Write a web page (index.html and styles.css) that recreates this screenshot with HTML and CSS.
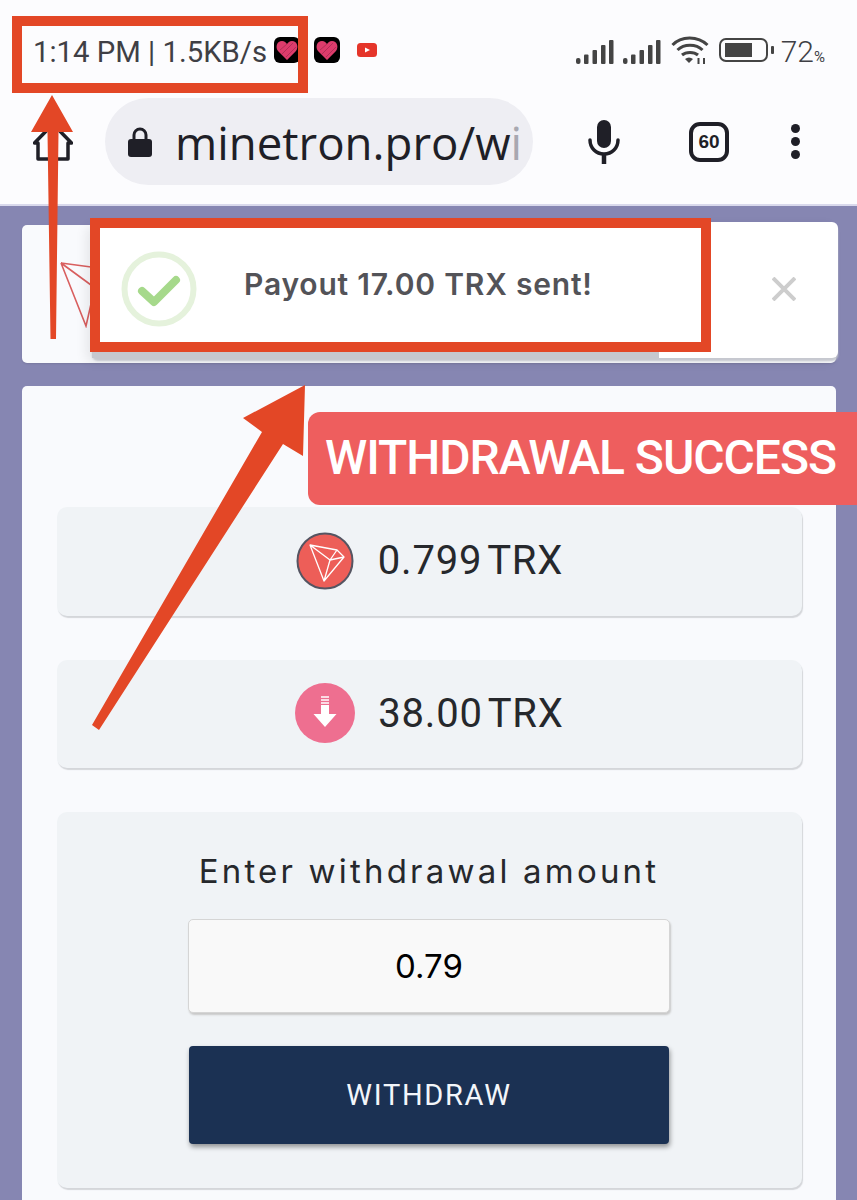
FILE: index.html
```html
<!DOCTYPE html>
<html lang="en">
<head>
<meta charset="utf-8">
<title>Minetron withdraw</title>
<link rel="stylesheet" href="styles.css">
</head>
<body>
<header class="chrome">
  <div class="status">
    <div class="status-left">
      <span class="clock">1:14 PM | 1.5KB/s</span>
      <svg class="app" viewBox="0 0 26 26"><rect width="26" height="26" rx="6" fill="#000"/><path d="M13 23 4 14C1 10 3 4 8 4c2.500 0 4 1.500 5 3 1-1.500 2.500-3 5-3 5 0 7 6 4 10Z" fill="#dc3c6c"/><path d="M6 13 13 7M8 17 19 6M12 20 22 10" stroke="#a82b52" stroke-width=".8"/></svg>
      <svg class="app second" viewBox="0 0 26 26"><rect width="26" height="26" rx="6" fill="#000"/><path d="M13 23 4 14C1 10 3 4 8 4c2.500 0 4 1.500 5 3 1-1.500 2.500-3 5-3 5 0 7 6 4 10Z" fill="#dc3c6c"/><path d="M6 13 13 7M8 17 19 6M12 20 22 10" stroke="#a82b52" stroke-width=".8"/></svg>
      <svg class="yt" viewBox="0 0 20 14"><rect width="20" height="14" rx="3.500" fill="#e5352a"/><path d="M8 4.500 13 7 8 9.500Z" fill="#fff"/></svg>
    </div>
    <div class="status-right">
      <svg class="signal" viewBox="0 0 38 24"><g fill="#444"><rect x="0" y="18" width="4.500" height="6" rx="2"/><rect x="8" y="14.500" width="4.500" height="9.500" rx="1"/><rect x="16.500" y="10" width="4.500" height="14" rx="1"/><rect x="25" y="5" width="4.500" height="19" rx="1"/><rect x="33" y="0" width="4.500" height="24" rx="1"/></g></svg>
      <svg class="signal gap-a" viewBox="0 0 38 24"><g fill="#444"><rect x="0" y="18" width="4.500" height="6" rx="2"/><rect x="8" y="14.500" width="4.500" height="9.500" rx="1"/><rect x="16.500" y="10" width="4.500" height="14" rx="1"/><rect x="25" y="5" width="4.500" height="19" rx="1"/><rect x="33" y="0" width="4.500" height="24" rx="1"/></g></svg>
      <svg class="wifi" viewBox="0 0 38 28"><g fill="none" stroke="#444" stroke-width="3"><path d="M1.500 9C10 -0.500 27 -0.500 36.500 9"/><path d="M6.500 14C13 7.500 25 7.500 31.500 14"/><path d="M11 19C15 15.500 23 15.500 27 19"/></g><path d="M14 23c2.500-2 5.500-2 8 0L18 27Z" fill="#444"/><path d="M27.500 22v6M33 22v6" stroke="#444" stroke-width="2"/></svg>
      <svg class="battery" viewBox="0 0 56 24"><rect x="1" y="1" width="47" height="22" rx="6" fill="none" stroke="#444" stroke-width="2"/><rect x="6" y="5" width="27" height="14" fill="#444"/><rect x="52" y="8" width="3" height="8" rx="1" fill="#444"/></svg>
      <span class="pct">72<small>%</small></span>
    </div>
  </div>
  <div class="toolbar">
    <svg class="home" viewBox="0 0 40 38"><path d="M1.500 20 20 1 38.500 20H35V36H5V20Z" fill="none" stroke="#1f1f27" stroke-width="3.500" stroke-linejoin="round"/></svg>
    <div class="omnibox">
      <svg class="lock" viewBox="0 0 24 30"><path d="M6 13V8a6 6 0 0 1 12 0v5" fill="none" stroke="#1f1f27" stroke-width="3"/><rect y="12" width="24" height="18" rx="3" fill="#1f1f27"/></svg>
      <span class="url">minetron.pro/w<span class="url-fade">i</span></span>
    </div>
    <svg class="mic" viewBox="0 0 32 44"><rect x="9" y="0" width="14" height="28" rx="7" fill="#1f1f27"/><path d="M2 20c0 8 6 14 14 14s14-6 14-14" fill="none" stroke="#1f1f27" stroke-width="3.500" stroke-linecap="round"/><path d="M16 33v11" stroke="#1f1f27" stroke-width="4.500"/></svg>
    <div class="tabs">60</div>
    <div class="menu"><i></i><i></i><i></i></div>
  </div>
</header>

<main class="page">
  <section class="card top-card">
    <svg class="plane" viewBox="0 0 32 66"><path d="M1 1 31 5M1 1 31 23M1 1 26 64 31 42" fill="none" stroke="#d95f5f" stroke-width="1.600"/></svg>
  </section>
  <section class="card body-card">
    <div class="stat">
      <svg class="coin" viewBox="0 0 58 58"><circle cx="29" cy="29" r="27.500" fill="#ed5e58" stroke="#555562" stroke-width="2"/><path d="M14 13 41 18 48 25 28 49ZM14 13 34 28 28 49M34 28 48 25M41 18 34 28" fill="none" stroke="#fff" stroke-width="1.300" stroke-linejoin="round"/></svg>
      <span>0.799 TRX</span>
    </div>
    <div class="stat">
      <svg class="coin coin-down" viewBox="0 0 60 60"><circle cx="30" cy="30" r="30" fill="#ee6f90"/><path d="M26 14h8M26 17h8M26 20h8" stroke="#fff" stroke-width="1.500"/><path d="M26 22h8v9h7.500L30 44 18.500 31H26Z" fill="#fff"/></svg>
      <span>38.00 TRX</span>
    </div>
    <form class="withdraw">
      <label class="prompt" for="amount">Enter withdrawal amount</label>
      <input class="amount" id="amount" value="0.79">
      <button class="submit" type="button">WITHDRAW</button>
    </form>
  </section>
</main>

<div class="toast">
  <svg class="tick" viewBox="0 0 76 76"><circle cx="38" cy="38" r="34.500" fill="none" stroke="#e5f2dc" stroke-width="6"/><path d="M21 40 33 51 55 29" fill="none" stroke="#a6d98b" stroke-width="8" stroke-linecap="round" stroke-linejoin="round"/></svg>
  <span class="toast-msg">Payout 17.00 TRX sent!</span>
  <svg class="toast-close" viewBox="0 0 24 24"><path d="M1 1 23 23M23 1 1 23" stroke="#cdcdcd" stroke-width="4"/></svg>
  <div class="toast-bar"></div>
</div>

<div class="mark mark-clock"></div>
<div class="mark mark-toast"></div>
<svg class="arrows" viewBox="0 0 857 1200">
  <path d="M52 95 73 132 58.500 132 56 339 50.500 339 47.500 132 31 132Z" fill="#e34726"/>
  <path d="M305 385 303 456 283 444 99 730 92 725 262 432 243 418Z" fill="#e34726"/>
</svg>
<div class="callout">WITHDRAWAL SUCCESS</div>
</body>
</html>
```

FILE: styles.css
```css
* { box-sizing: border-box; }
html, body { margin: 0; padding: 0; }
body {
  width: 857px;
  height: 1200px;
  overflow: hidden;
  position: relative;
  background: #8686b2;
  font-family: Roboto, "Liberation Sans", sans-serif;
}

.chrome {
  height: 206px;
  background: #fcfcfe;
  border-bottom: 2px solid #d9d9ec;
}
.status {
  height: 98px;
  display: flex;
  justify-content: space-between;
  align-items: flex-start;
  padding: 37px 32px 0 33px;
}
.status-left, .status-right { display: flex; align-items: center; height: 26px; }
.clock { font-size: 29.300px; padding-top: 3px; color: #3f3f45; white-space: nowrap; }
.app { width: 26px; height: 26px; margin-left: 7px; flex: none; }
.app.second { margin-left: 14px; }
.yt { width: 20px; height: 14px; margin-left: 17px; flex: none; }
.signal { width: 38px; height: 24px; margin-top: 3px; }
.signal.gap-a { margin-left: 9px; }
.wifi { width: 38px; height: 28px; margin-left: 10px; }
.battery { width: 56px; height: 24px; margin-left: 10px; }
.pct { font-size: 30px; padding-top: 3px; color: #3f3f45; margin-left: 6px; font-weight: 300; }
.pct small { font-size: 15px; font-weight: 400; }

.toolbar {
  height: 87px;
  display: flex;
  align-items: center;
  padding-left: 33px;
}
.home { width: 40px; height: 38px; }
.omnibox {
  width: 428px;
  height: 87px;
  margin-left: 32px;
  padding: 0 8px 0 23px;
  border-radius: 44px;
  background: #eeeef3;
  display: flex;
  align-items: center;
  overflow: hidden;
}
.lock { flex: none; width: 24px; height: 30px; }
.url {
  margin-left: 23px;
  flex: 1;
  white-space: nowrap;
  font-family: "Open Sans", sans-serif;
  font-size: 45.600px;
  color: #1f1f27;
}
.url-fade { color: #a8a8b0; }
.mic { width: 32px; height: 44px; margin-left: 55px; }
.tabs {
  width: 40px;
  height: 40px;
  margin-left: 69px;
  border: 4px solid #1f1f27;
  border-radius: 11px;
  display: flex;
  align-items: center;
  justify-content: center;
  font-family: "Liberation Sans", sans-serif;
  font-size: 19px;
  font-weight: 700;
  color: #1f1f27;
}
.menu {
  width: 10px;
  margin-left: 62px;
  display: flex;
  flex-direction: column;
  gap: 4px;
}
.menu i { width: 9px; height: 9px; border-radius: 50%; background: #1f1f27; }

.page {
  height: 994px;
  padding: 19px 21px 0 22px;
  display: flex;
  flex-direction: column;
  gap: 23px;
}
.card {
  background: #f9fafd;
  border-radius: 5px;
}
.top-card {
  height: 138px;
  flex: none;
  padding: 37px 0 0 38px;
  box-shadow: 0 1px 2px rgba(0,0,0,.1);
}
.plane { display: block; width: 32px; height: 66px; }
.body-card {
  flex: 1;
  border-radius: 5px 5px 0 0;
  padding: 121px 34px 0 35px;
  display: flex;
  flex-direction: column;
  gap: 44px;
}
.stat {
  height: 108.500px;
  padding-bottom: 1px;
  background: #f0f3f6;
  border-radius: 10px;
  box-shadow: 1px 2px 1px #d4d6da;
  display: flex;
  align-items: center;
  justify-content: center;
  gap: 24px;
  font-size: 40px;
  color: #26282c;
  letter-spacing: .8px;
  word-spacing: -5px;
}
.coin { width: 58px; height: 58px; flex: none; }
.coin-down { width: 60px; height: 60px; margin-right: -1px; }
.withdraw {
  height: 376px;
  background: #f0f3f6;
  border-radius: 10px;
  box-shadow: 1px 2px 1px #d4d6da;
  display: flex;
  flex-direction: column;
  align-items: center;
  padding: 40px 1px 0 0;
}
.prompt {
  font-family: Inter, Roboto, sans-serif;
  font-size: 33px;
  line-height: 38px;
  letter-spacing: 3.200px;
  color: #26282c;
  white-space: nowrap;
}
.amount {
  width: 482px;
  height: 94px;
  margin-top: 29px;
  background: #f9f9f9;
  border: 1px solid #d5d5d5;
  border-radius: 5px;
  box-shadow: 1px 2px 2px #c8c8c8;
  font-family: Inter, Roboto, sans-serif;
  font-size: 33px;
  color: #000;
  text-align: center;
}
.submit {
  width: 480px;
  height: 98px;
  margin-top: 33px;
  background: #1b3153;
  border: 0;
  border-radius: 4px;
  box-shadow: 1px 3px 5px rgba(0,0,0,.4);
  color: #f3f6fa;
  font-family: Roboto, sans-serif;
  font-size: 29px;
  letter-spacing: 1.700px;
}

.toast {
  position: absolute;
  left: 92px;
  top: 222px;
  width: 746px;
  height: 136px;
  background: #fff;
  border-radius: 6px;
  box-shadow: 0 3px 2px #c6c8cf, -6px 4px 12px rgba(0,0,0,.08);
}
.tick { position: absolute; left: 29px; top: 29px; width: 76px; height: 76px; }
.toast-msg {
  position: absolute;
  left: 152px;
  top: 44px;
  font-family: Inter, Roboto, sans-serif;
  font-weight: 600;
  font-size: 30px;
  letter-spacing: .8px;
  color: #535358;
  white-space: nowrap;
}
.toast-close { position: absolute; left: 680px; top: 55px; width: 24px; height: 24px; }
.toast-bar {
  position: absolute;
  left: 0;
  bottom: 0;
  width: 567px;
  height: 6px;
  background: #c6c8cf;
}

.mark { position: absolute; border: 10.500px solid #e34726; }
.mark-clock { left: 12px; top: 16px; width: 296px; height: 77px; }
.mark-toast { left: 90px; top: 218px; width: 621px; height: 134px; }
.arrows { position: absolute; left: 0; top: 0; width: 857px; height: 1200px; pointer-events: none; }

.callout {
  position: absolute;
  left: 308px;
  top: 412px;
  width: 549px;
  height: 93px;
  border-radius: 12px 0 0 12px;
  background: #ee5e5e;
  color: #fff;
  font-family: Roboto, sans-serif;
  font-weight: 500;
  font-size: 48px;
  letter-spacing: -1.050px;
  line-height: 92px;
  padding-left: 17px;
  white-space: nowrap;
}
```
